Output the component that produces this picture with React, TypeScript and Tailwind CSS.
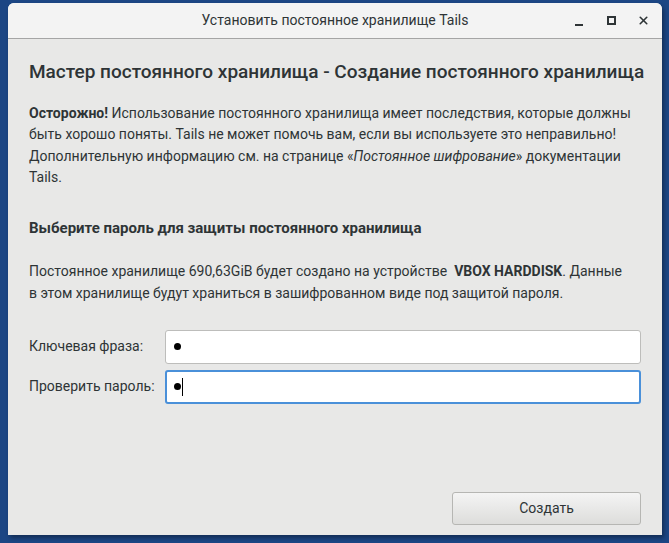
import { X } from "lucide-react";

const font = { fontFamily: "Roboto, 'Noto Sans', sans-serif" };

function TitleBar() {
  return (
    <div className="relative h-[36px] flex items-center justify-center bg-[#f3f3f3] border-b border-[#a5a5a5] rounded-t-[6px]">
      <span className="text-[14px] text-[#2e3436]">Установить постоянное хранилище Tails</span>
      <div className="absolute right-[12px] top-0 h-full flex items-center gap-[20px] text-[#2e3436]">
        <span className="w-[12px] h-[12px] flex items-end justify-center pb-[1px]">
          <span className="block w-[8px] h-[2px] bg-[#2e3436]" />
        </span>
        <span className="w-[12px] h-[12px] flex items-center justify-center">
          <span className="block w-[9px] h-[9px] border-2 border-[#2e3436]" />
        </span>
        <X size={13} strokeWidth={3} />
      </div>
    </div>
  );
}

export default function App() {
  return (
    <div className="w-[669px] h-[543px] bg-[#1c4684] pt-[3px] pl-[8px] overflow-hidden" style={font}>
      <div className="w-[654px] h-[532px] flex flex-col bg-[#e8e8e7] rounded-t-[6px] shadow-[2px_3px_4px_rgba(0,0,0,0.35)]">
        <TitleBar />
        <div className="flex-1 flex flex-col px-[21px] text-[#2e3436]">
          <h1 className="text-[19px] leading-[24px] mt-[21px] font-medium whitespace-nowrap">
            Мастер постоянного хранилища - Создание постоянного хранилища
          </h1>
          <p className="text-[14px] leading-[21.4px] mt-[19px] whitespace-nowrap">
            <b className="font-bold">Осторожно!</b> Использование постоянного хранилища имеет последствия, которые должны
            <br />
            быть хорошо поняты. Tails не может помочь вам, если вы используете это неправильно!
            <br />
            Дополнительную информацию см. на странице «<i>Постоянное шифрование</i>» документации
            <br />
            Tails.
          </p>
          <h2 className="text-[15px] leading-[20px] font-bold mt-[29px]">
            Выберите пароль для защиты постоянного хранилища
          </h2>
          <p className="text-[14px] leading-[22px] mt-[22px] whitespace-nowrap">
            Постоянное хранилище 690,63GiB будет создано на устройстве&nbsp; <b>VBOX HARDDISK</b>. Данные
            <br />
            в этом хранилище будут храниться в зашифрованном виде под защитой пароля.
          </p>
          <div className="mt-[26px] flex flex-col gap-[6px]">
            <div className="flex items-center">
              <label className="w-[136px] text-[14px]">Ключевая фраза:</label>
              <div className="flex-1 h-[34px] bg-white border border-[#bdbdbb] rounded-[3px] flex items-center px-[8px]">
                <span className="w-[7px] h-[7px] rounded-full bg-black" />
              </div>
            </div>
            <div className="flex items-center">
              <label className="w-[136px] text-[14px]">Проверить пароль:</label>
              <div className="flex-1 h-[34px] bg-white border-2 border-[#4a90d9] rounded-[3px] flex items-center px-[7px]">
                <span className="w-[7px] h-[7px] rounded-full bg-black" />
                <span className="w-[1px] h-[18px] bg-black ml-[1px]" />
              </div>
            </div>
          </div>
          <div className="flex-1" />
          <div className="flex justify-end mb-[10px]">
            <button className="w-[189px] h-[33px] rounded-[3px] border border-[#b6b6b3] bg-gradient-to-b from-[#f4f4f4] to-[#dddddb] text-[14px] text-[#2e3436]">
              Создать
            </button>
          </div>
        </div>
      </div>
    </div>
  );
}
